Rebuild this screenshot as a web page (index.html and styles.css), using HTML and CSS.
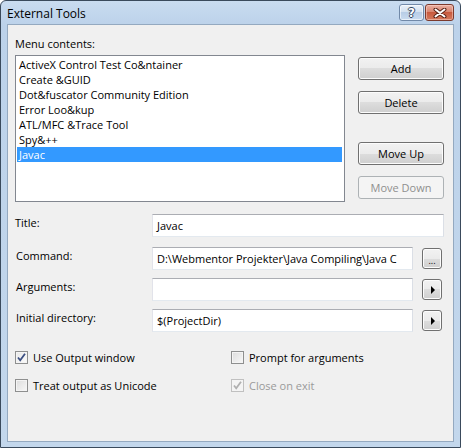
FILE: index.html
```html
<!DOCTYPE html>
<html>
<head>
<meta charset="utf-8">
<link rel="stylesheet" href="styles.css">
</head>
<body>
<div class="window">
  <div class="titlebar">
    <span class="title">External Tools</span>
    <div class="caption-btns">
      <div class="cap help">?</div>
      <div class="cap close">
        <svg width="14" height="10" viewBox="0 0 14 10">
          <path d="M2.5 1.5 L11.5 8.5 M11.5 1.5 L2.5 8.5" stroke="#5a2418" stroke-width="4" stroke-linecap="round"/>
          <path d="M2.5 1.5 L11.5 8.5 M11.5 1.5 L2.5 8.5" stroke="#ffffff" stroke-width="2" stroke-linecap="round"/>
        </svg>
      </div>
    </div>
  </div>
  <div class="client">
    <div class="top">
      <div class="list-col">
        <div class="lbl">Menu contents:</div>
        <ul class="list">
          <li>ActiveX Control Test Co&amp;ntainer</li>
          <li>Create &amp;GUID</li>
          <li>Dot&amp;fuscator Community Edition</li>
          <li>Error Loo&amp;kup</li>
          <li>ATL/MFC &amp;Trace Tool</li>
          <li>Spy&amp;++</li>
          <li class="sel">Javac</li>
        </ul>
      </div>
      <div class="btn-col">
        <div class="btn">Add</div>
        <div class="btn gap-s">Delete</div>
        <div class="btn gap-l">Move Up</div>
        <div class="btn gap-s disabled">Move Down</div>
      </div>
    </div>
    <div class="form">
      <div class="row">
        <div class="flabel">Title:</div>
        <div class="input wide">Javac</div>
      </div>
      <div class="row r2">
        <div class="flabel in">Command:</div>
        <div class="input"><span class="clip">D:\Webmentor Projekter\Java Compiling\Java C</span></div>
        <div class="sbtn dots">...</div>
      </div>
      <div class="row r3">
        <div class="flabel in">Arguments:</div>
        <div class="input"></div>
        <div class="sbtn"><span class="tri"></span></div>
      </div>
      <div class="row r3">
        <div class="flabel in">Initial directory:</div>
        <div class="input">$(ProjectDir)</div>
        <div class="sbtn"><span class="tri"></span></div>
      </div>
    </div>
    <div class="checks">
      <div class="chk"><span class="box checked">
        <svg width="11" height="11" viewBox="0 0 11 11"><path d="M2 5.5 L4.2 8.2 L9 1.8" fill="none" stroke="#3b4f82" stroke-width="1.8"/></svg>
      </span>Use Output window</div>
      <div class="chk"><span class="box"></span>Prompt for arguments</div>
      <div class="chk"><span class="box"></span>Treat output as Unicode</div>
      <div class="chk dis"><span class="box checked">
        <svg width="11" height="11" viewBox="0 0 11 11"><path d="M2 5.5 L4.2 8.2 L9 1.8" fill="none" stroke="#b0b0b0" stroke-width="1.8"/></svg>
      </span>Close on exit</div>
    </div>
  </div>
</div>
</body>
</html>
```
FILE: styles.css
```css
* { box-sizing: border-box; }
html, body { margin: 0; padding: 0; background: #ffffff; }
body {
  font-family: "Open Sans", "Noto Sans", sans-serif;
  font-size: 11px;
  color: #000;
}
.window {
  width: 461px;
  height: 448px;
  border: 1px solid #3a4a5c;
  border-radius: 6px 6px 0 0;
  background: linear-gradient(to bottom, #c9dcf0 0px, #bcd2ea 24px, #c3d7ec 100%);
  display: flex;
  flex-direction: column;
  overflow: hidden;
}
.titlebar {
  height: 23px;
  display: flex;
  align-items: flex-start;
  justify-content: space-between;
  padding: 0 6px 0 6px;
}
.title {
  font-size: 12px;
  line-height: 15px;
  margin-top: 5px;
  color: #000;
}
.caption-btns {
  display: flex;
  gap: 1px;
  margin-top: 3px;
}
.cap {
  height: 17px;
  border-radius: 3px;
  display: flex;
  align-items: center;
  justify-content: center;
}
.help {
  width: 25px;
  border: 1px solid #7189a8;
  background: linear-gradient(to bottom, #eaf1f9 0%, #d3e1f0 45%, #b8cde6 50%, #c9dbef 100%);
  box-shadow: inset 0 0 0 1px rgba(255,255,255,0.6);
  color: #ffffff;
  font-family: "DejaVu Sans", sans-serif;
  font-weight: bold;
  font-size: 12px;
  text-shadow: -1px 0 #33475f, 1px 0 #33475f, 0 -1px #33475f, 0 1px #33475f;
}
.close {
  width: 29px;
  border: 1px solid #7c3a2c;
  background: linear-gradient(to bottom, #eab0a2 0%, #d98670 45%, #c85a3e 50%, #d47a5e 100%);
  box-shadow: inset 0 0 0 1px rgba(255,220,210,0.5);
}
.client {
  flex: 1;
  margin: 0 6px 5px 6px;
  border: 1px solid #94a9c0;
  background: #f0f0f0;
  padding: 11px 7px 0 7px;
}
.top {
  display: flex;
  gap: 13px;
}
.lbl {
  line-height: 15px;
  height: 15px;
  margin-bottom: 4px;
}
.list {
  list-style: none;
  margin: 0;
  width: 330px;
  height: 147px;
  border: 1px solid #828790;
  background: #fff;
  padding: 1px 1px 0 1px;
}
.list li {
  line-height: 15px;
  height: 15px;
  padding-left: 2px;
  white-space: nowrap;
}
.list li.sel {
  background: #3399ff;
  color: #fff;
  margin-right: 1px;
}
.btn-col {
  padding-top: 21px;
  display: flex;
  flex-direction: column;
}
.btn {
  width: 86px;
  height: 23px;
  border: 1px solid #707070;
  border-radius: 3px;
  background: linear-gradient(to bottom, #f2f2f2 0%, #ebebeb 50%, #dddddd 50%, #cfcfcf 100%);
  box-shadow: inset 0 0 0 1px #fcfcfc;
  display: flex;
  align-items: center;
  justify-content: center;
  line-height: 15px;
}
.gap-s { margin-top: 11px; }
.gap-l { margin-top: 28px; }
.btn.disabled {
  border-color: #adb2b5;
  background: #f4f4f4;
  box-shadow: none;
  color: #8f8f8f;
}
.form {
  margin-top: 12px;
  display: flex;
  flex-direction: column;
}
.row {
  display: flex;
  align-items: flex-start;
  height: 23px;
}
.r2 { margin-top: 10px; }
.r3 { margin-top: 8px; }
.flabel {
  width: 137px;
  line-height: 15px;
  padding-top: 1px;
}
.flabel.in { padding-left: 1px; }
.input {
  width: 261px;
  height: 23px;
  border: 1px solid #abadb3;
  border-color: #abadb3 #dbdfe6 #e3e9ef #e2e3ea;
  background: #fff;
  padding: 0 4px;
  line-height: 21px;
  white-space: nowrap;
  overflow: hidden;
}
.clip { display: block; overflow: hidden; white-space: nowrap; }
.input.wide { width: 292px; }
.sbtn {
  width: 20px;
  height: 21px;
  margin-left: 9px;
  margin-top: 1px;
  border: 1px solid #707070;
  border-radius: 3px;
  background: linear-gradient(to bottom, #f2f2f2 0%, #ebebeb 50%, #dddddd 50%, #cfcfcf 100%);
  box-shadow: inset 0 0 0 1px #fcfcfc;
  display: flex;
  align-items: center;
  justify-content: center;
}
.dots {
  font-size: 9px;
  line-height: 9px;
  padding-top: 3px;
}
.tri {
  width: 0;
  height: 0;
  border-top: 4px solid transparent;
  border-bottom: 4px solid transparent;
  border-left: 4px solid #000;
  margin-left: 1px;
}
.checks {
  margin-top: 18px;
  display: grid;
  grid-template-columns: 216px auto;
  row-gap: 13px;
}
.chk {
  display: flex;
  align-items: center;
  line-height: 15px;
  height: 15px;
}
.box {
  width: 13px;
  height: 13px;
  border: 1px solid #8e8f8f;
  background: linear-gradient(135deg, #dcdcdc 0%, #f8f8f8 100%);
  box-shadow: inset 0 0 0 1px #f4f4f4;
  margin-right: 5px;
  display: flex;
  align-items: center;
  justify-content: center;
}
.box.checked { background: linear-gradient(135deg, #e8e8e8 0%, #fbfbfb 100%); }
.chk.dis { color: #9a9a9a; }
.chk.dis .box { border-color: #c0c0c0; background: #f4f4f4; }
```
